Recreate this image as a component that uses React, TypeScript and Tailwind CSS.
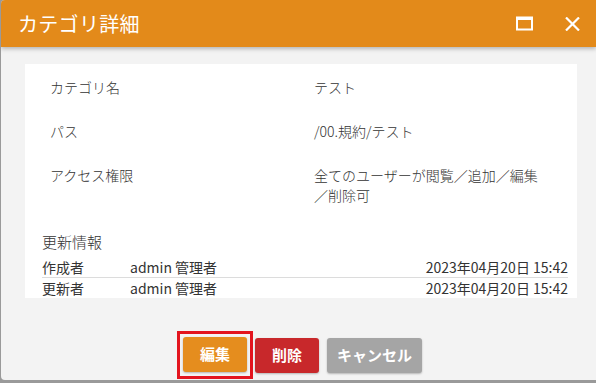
const font = { fontFamily: '"Noto Sans CJK JP", "Noto Sans", sans-serif' };

function MaximizeIcon() {
  return (
    <svg width="17" height="15" viewBox="0 0 17 15" fill="none">
      <rect x="1" y="1.5" width="15" height="12" stroke="white" strokeWidth="2" />
      <rect x="1" y="1" width="15" height="3" fill="white" />
    </svg>
  );
}

function CloseIcon() {
  return (
    <svg width="15" height="14" viewBox="0 0 15 14" fill="none">
      <path d="M1 0.5 L14 13.5 M14 0.5 L1 13.5" stroke="white" strokeWidth="2.2" />
    </svg>
  );
}

const rows = [
  { label: 'カテゴリ名', value: 'テスト' },
  { label: 'パス', value: '/00.規約/テスト' },
  { label: 'アクセス権限', value: '全てのユーザーが閲覧／追加／編集／削除可' },
];

const history = [
  { label: '作成者', user: 'admin 管理者', date: '2023年04月20日 15:42' },
  { label: '更新者', user: 'admin 管理者', date: '2023年04月20日 15:42' },
];

export default function App() {
  return (
    <div className="w-[596px] h-[383px] bg-[#9a9a9a] overflow-hidden" style={font}>
      <div className="ml-[1px] h-[380px] flex flex-col bg-[#f3f3f3] rounded-tl-[4px] rounded-bl-[4px] overflow-hidden">
        {/* header */}
        <div className="h-[47px] flex-shrink-0 bg-[#e38a1a] flex items-center pl-[17px] pr-[16px] shadow-[0_2px_4px_rgba(0,0,0,0.25)] relative z-10">
          <h1 className="text-[20px] leading-none text-white tracking-[0.3px]">カテゴリ詳細</h1>
          <div className="ml-auto flex items-center gap-[32px]">
            <MaximizeIcon />
            <CloseIcon />
          </div>
        </div>

        {/* body */}
        <div className="flex-1 flex flex-col pl-[24px] pr-[19px] pt-[17px]">
          <div className="bg-white pt-[1px]">
            {rows.map((r) => (
              <div key={r.label} className="grid grid-cols-[289px_1fr] py-[12px] text-[14px] leading-[20px] text-[#333] font-light">
                <div className="pl-[25px]">{r.label}</div>
                <div className="w-[230px]">{r.value}</div>
              </div>
            ))}
            <div className="pl-[17px] pr-[9px] mt-[14px]">
              <div className="text-[15px] leading-[22px] text-[#333] font-light">更新情報</div>
              <div className="mt-[4px] text-[14px] leading-[20px] text-[#333]">
                {history.map((h, i) => (
                  <div key={h.label} className={`flex ${i === 0 ? 'border-b border-[#dcdcdc]' : ''}`}>
                    <div className="w-[88px]">{h.label}</div>
                    <div>{h.user}</div>
                    <div className="ml-auto">{h.date}</div>
                  </div>
                ))}
              </div>
            </div>
          </div>

          {/* buttons */}
          <div className="mt-auto mb-[3px] flex items-start justify-center gap-[2px] pr-[3px]">
            <div className="border-[3px] border-[#e3141e] p-[3px] pb-[4px] -mb-[2px]">
              <button className="w-[64px] h-[35px] rounded-[3px] bg-[#e58d1e] text-white text-[15px] font-bold shadow-[0_1px_2px_rgba(0,0,0,0.25)]">編集</button>
            </div>
            <button className="mt-[7px] w-[64px] h-[35px] rounded-[3px] bg-[#c8282b] text-white text-[15px] font-bold shadow-[0_1px_2px_rgba(0,0,0,0.25)]">削除</button>
            <button className="mt-[7px] ml-[6px] px-[10px] h-[35px] rounded-[3px] bg-[#a5a5a5] text-white text-[15px] font-bold shadow-[0_1px_2px_rgba(0,0,0,0.25)]">キャンセル</button>
          </div>
        </div>
      </div>
    </div>
  );
}
